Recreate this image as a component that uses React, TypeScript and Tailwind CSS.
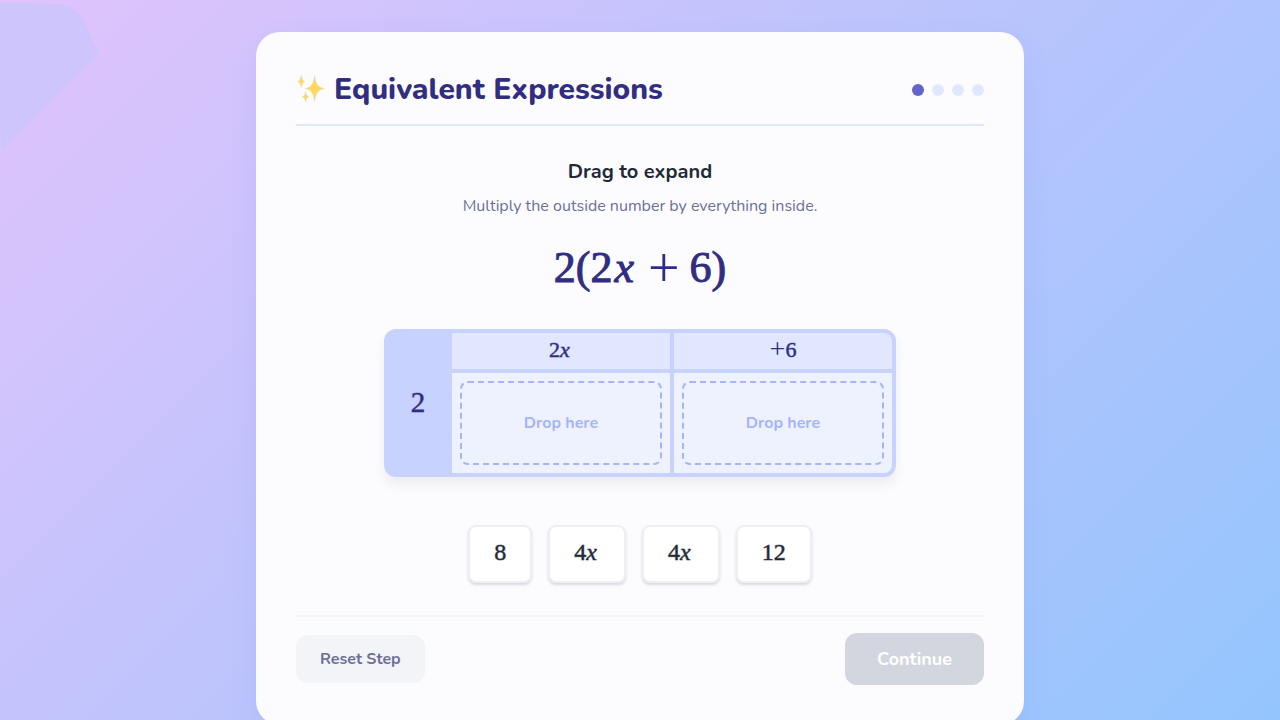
import React, { useState } from "react";

const tiles = [
  { id: "a", num: "8", x: false },
  { id: "b", num: "4", x: true },
  { id: "c", num: "4", x: true },
  { id: "d", num: "12", x: false },
];

const steps = [1, 2, 3, 4];

function Sparkles() {
  return (
    <svg viewBox="0 0 30 30" className="h-[30px] w-[30px]" aria-hidden="true">
      <g fill="#ffd95e" stroke="#d6d6e4" strokeWidth="0.4">
        <path d="M18.6 0.5C19.9 9 21.6 11.8 28.2 13.6C21.6 15.4 19.9 18.2 18.6 26.4C17.3 18.2 15.6 15.4 9.4 13.6C15.6 11.8 17.3 9 18.6 0.5Z" />
        <path d="M5.2 0.4C6.1 4.6 6.8 5.8 8.8 6.6C6.8 7.5 6.1 8.8 5.2 12.6C4.3 8.8 3.6 7.5 1.4 6.6C3.6 5.8 4.3 4.6 5.2 0.4Z" />
        <path d="M9.6 16.4C10.4 20 11.1 20.9 13.2 21.6C11.1 22.4 10.4 23.4 9.6 26.8C8.8 23.4 8.1 22.4 6 21.6C8.1 20.9 8.8 20 9.6 16.4Z" />
      </g>
    </svg>
  );
}

function Term({ num, x }: { num: string; x?: boolean }) {
  return (
    <span>
      {num}
      {x && <i className="pr-[3px]">x</i>}
    </span>
  );
}

function DropZone({
  label,
  value,
  onDropTile,
}: {
  label: string;
  value?: string;
  onDropTile: (id: string) => void;
}) {
  const tile = tiles.find((t) => t.id === value);
  return (
    <div className="bg-[#eef2ff] p-2 font-[Nunito,sans-serif]">
      <div
        aria-label={label}
        onDragOver={(e) => e.preventDefault()}
        onDrop={(e) => onDropTile(e.dataTransfer.getData("text/plain"))}
        className="flex h-[84px] items-center justify-center rounded-lg border-2 border-dashed border-[#a5b4fc] text-base font-bold text-[#a5b4fc]"
      >
        {tile ? (
          <span className="font-['Liberation_Serif',serif] text-2xl font-normal text-[#312e81]">
            <Term num={tile.num} x={tile.x} />
          </span>
        ) : (
          "Drop here"
        )}
      </div>
    </div>
  );
}

function App() {
  const [placed, setPlaced] = useState<Record<string, string>>({});
  const done = Boolean(placed.left && placed.right);

  return (
    <div className="relative flex min-h-screen items-start justify-center overflow-hidden bg-[linear-gradient(135deg,#e0c3fc_0%,#93c5fd_100%)] p-8 font-[Nunito,sans-serif]">
      <svg viewBox="0 0 100 150" className="absolute top-0 left-0 h-[150px] w-[100px]" aria-hidden="true">
        <path d="M0 3L60 4Q76 6 85 23L98 52Q99 54 97 56L5 147Q1 150 1 146L0 100Z" fill="#cdc5fb" />
      </svg>

      <main className="relative w-full max-w-3xl rounded-3xl bg-[#fcfcff] p-10 shadow-[0_12px_28px_rgba(99,130,241,0.12)]">
        <header className="mb-8 flex items-center justify-between border-b-2 border-[#e0e7ff] pb-4">
          <h1 className="flex items-center gap-2 text-3xl leading-9 font-extrabold text-[#312e81]">
            <Sparkles />
            Equivalent Expressions
          </h1>
          <div className="flex gap-2">
            {steps.map((step) => (
              <span
                key={step}
                className={
                  step === 1
                    ? "h-3 w-3 rounded-full bg-[#6366c9]"
                    : "h-3 w-3 rounded-full bg-[#e0e7ff]"
                }
              />
            ))}
          </div>
        </header>

        <section className="text-center">
          <h2 className="text-xl leading-7 font-bold text-[#1f2937]">Drag to expand</h2>
          <p className="mt-2 text-base leading-6 text-[#6b7096]">
            Multiply the outside number by everything inside.
          </p>
          <div className="mt-6 flex h-[51px] items-center justify-center font-['Liberation_Serif',serif] text-[44px] text-[#312e81] [-webkit-text-stroke:1px_#312e81]">
            <span>2(2</span>
            <i className="pr-1 pl-[2px]">x</i>
            <span className="px-[10px] text-[56px] [-webkit-text-stroke:0]">+</span>
            <span>6)</span>
          </div>
        </section>

        <div className="mx-auto mt-9 grid max-w-lg grid-cols-[60px_1fr_1fr] grid-rows-[36px_100px] gap-1 overflow-hidden rounded-xl border-4 border-[#c7d2fe] bg-[#c7d2fe] font-['Liberation_Serif',serif] text-[22px] text-[#312e81] shadow-[0_8px_12px_rgba(0,0,0,0.06)]">
          <div className="row-span-2 flex items-center justify-center text-[29px] [-webkit-text-stroke:1px_#312e8180]">
            2
          </div>
          <div className="flex items-center justify-center bg-[#e0e7ff] pb-1 [-webkit-text-stroke:1px_#312e8180]">
            <Term num="2" x />
          </div>
          <div className="flex items-center justify-center bg-[#e0e7ff] pb-1">
            <span className="text-[28px]">+</span>
            <span className="[-webkit-text-stroke:1px_#312e8180]">6</span>
          </div>
          <DropZone
            label="2 times 2x"
            value={placed.left}
            onDropTile={(id) => setPlaced({ ...placed, left: id })}
          />
          <DropZone
            label="2 times 6"
            value={placed.right}
            onDropTile={(id) => setPlaced({ ...placed, right: id })}
          />
        </div>

        <div className="mt-12 flex justify-center gap-4 font-['Liberation_Serif',serif] text-2xl text-[#1f2937] [-webkit-text-stroke:1px_#1f293780]">
          {tiles.map((tile) => (
            <button
              key={tile.id}
              type="button"
              draggable
              onDragStart={(e) => e.dataTransfer.setData("text/plain", tile.id)}
              className="h-[58px] cursor-grab rounded-lg border-2 border-[#eeeff4] bg-white px-6 pb-1 shadow-[0_2px_3px_rgba(0,0,0,0.14)]"
            >
              <Term num={tile.num} x={tile.x} />
            </button>
          ))}
        </div>

        <footer className="mt-8 flex items-center justify-between border-t-2 border-[#f3f4f6] pt-4">
          <button
            type="button"
            onClick={() => setPlaced({})}
            className="h-12 rounded-xl bg-[#f3f4f8] px-6 text-base font-bold text-[#6b7096]"
          >
            Reset Step
          </button>
          <button
            type="button"
            disabled={!done}
            className="h-[52px] rounded-xl bg-[#d3d6de] px-8 text-lg font-bold text-white"
          >
            Continue
          </button>
        </footer>
      </main>
    </div>
  );
}

export default App;
